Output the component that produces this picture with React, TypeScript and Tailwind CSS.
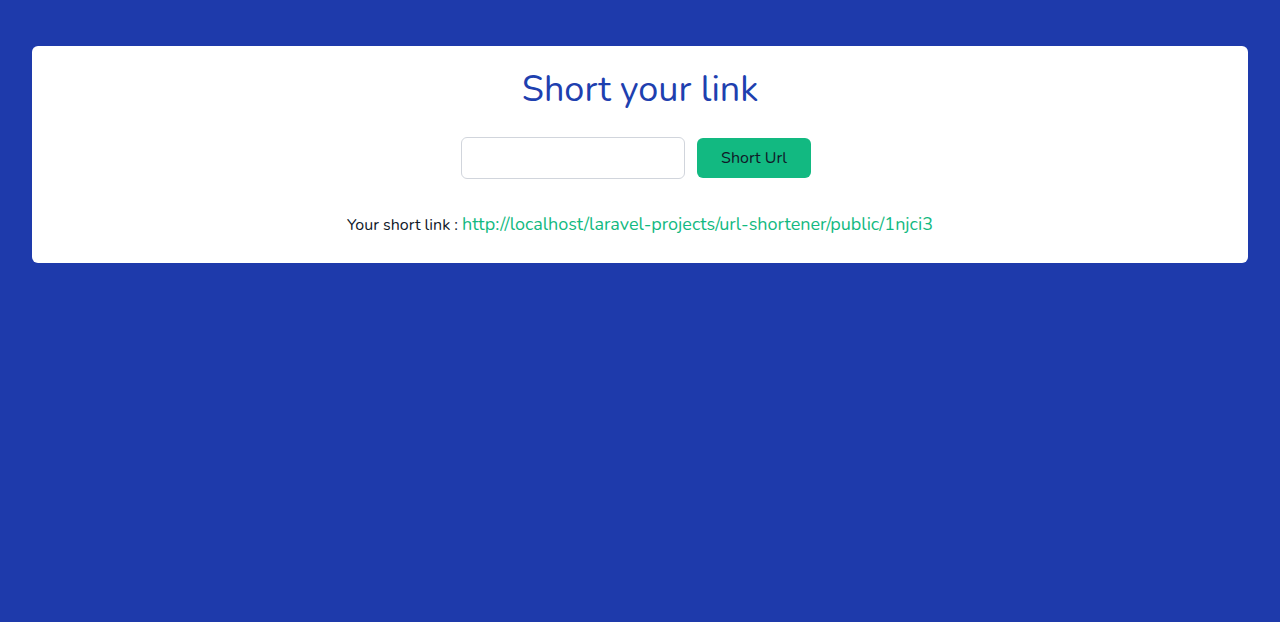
export default function App() {
  return (
    <div
      className="min-h-[622px] bg-[#1e3aab] px-8 pt-[46px]"
      style={{ fontFamily: 'Nunito, Lato, "Open Sans", sans-serif' }}
    >
      <div className="flex flex-col items-center rounded-md bg-white pb-[26px] pt-[22px]">
        <h1 className="text-[36px] leading-[44px] text-[#1e40af]">Short your link</h1>
        <form className="mr-2 mt-[25px] flex items-center gap-3" onSubmit={(e) => e.preventDefault()}>
          <input
            type="text"
            className="h-[42px] w-[224px] rounded-md border border-gray-300 px-3 outline-none"
          />
          <button
            type="submit"
            className="h-10 w-[114px] rounded-md bg-[#12b981] text-[16px] text-gray-900"
          >
            Short Url
          </button>
        </form>
        <p className="mt-[33px] text-[16px] leading-6 text-gray-900">
          Your short link :{' '}
          <a href="#" className="text-[18px] text-[#12b981]">
            http://localhost/laravel-projects/url-shortener/public/1njci3
          </a>
        </p>
      </div>
    </div>
  );
}
